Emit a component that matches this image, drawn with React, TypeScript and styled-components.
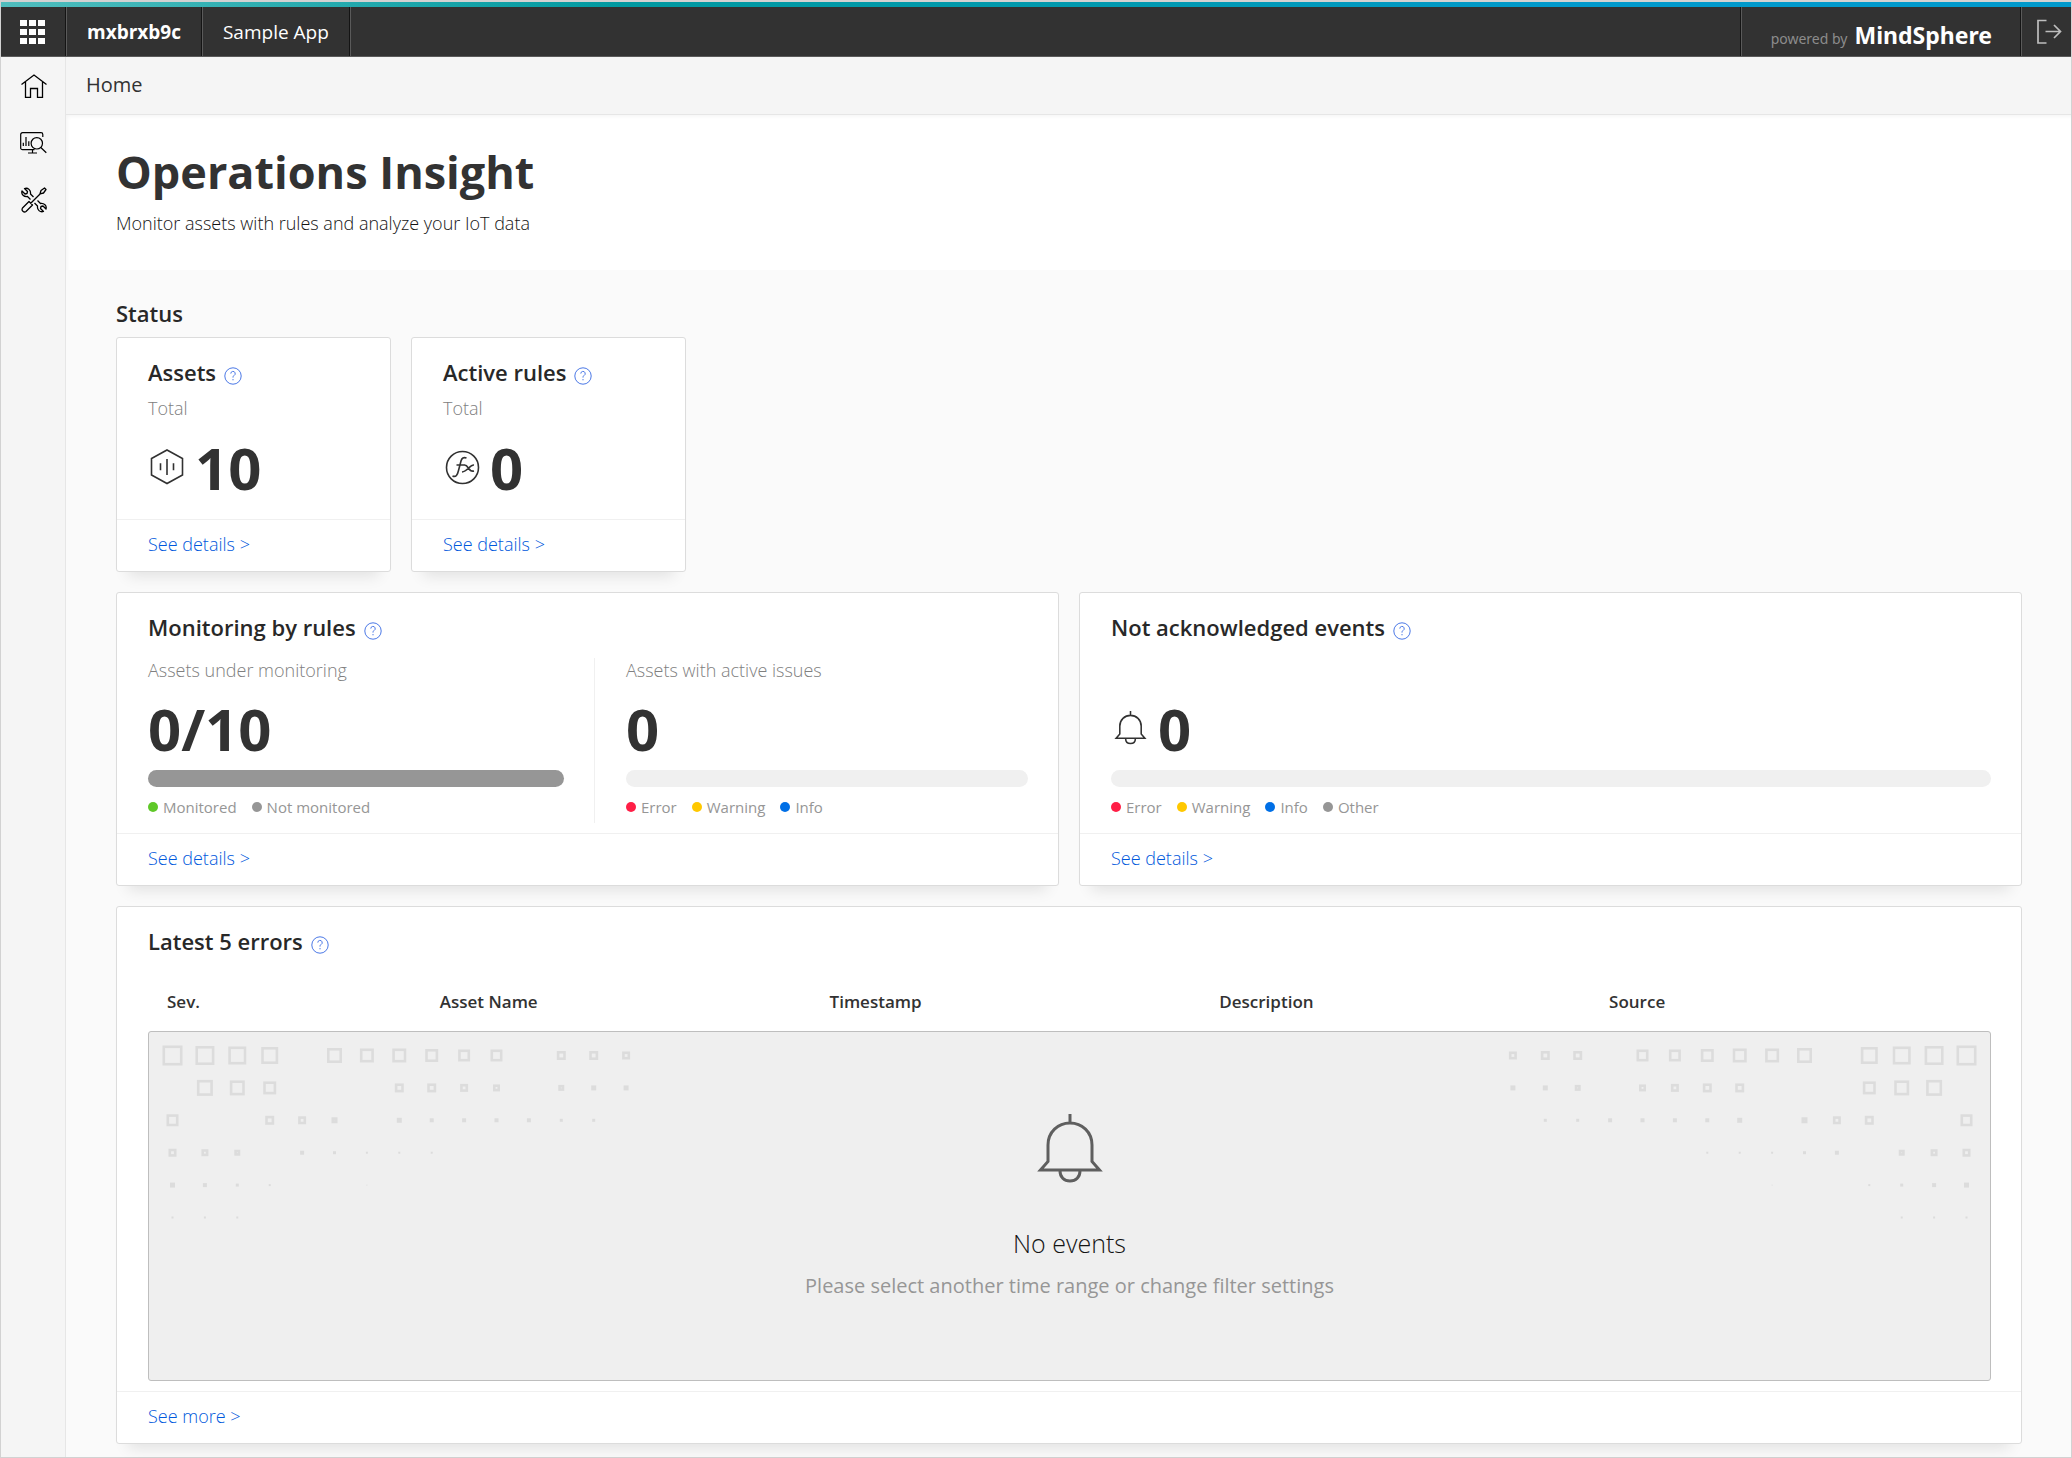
import React from 'react';
import styled, { createGlobalStyle } from 'styled-components';

const Global = createGlobalStyle`
  * { box-sizing: border-box; }
  body { margin: 0; background: #fafafa; color: #323232; font-family: "Open Sans", "Noto Sans", sans-serif; font-size: 18px; font-weight: 300; line-height: 24px; }
  h1, h2, h3, p { margin: 0; }
  a { color: inherit; text-decoration: none; }
  button { font: inherit; color: inherit; background: none; border: 0; padding: 0; cursor: pointer; }
`;

const Frame = styled.div`
  min-height: 100vh;
  display: flex;
  flex-direction: column;
  border: 1px solid #d2d2d2;
  border-top-width: 2px;
`;

const Header = styled.header`
  display: flex;
  flex-direction: column;
  border-bottom: 1px solid #5a5a5a;
  &::before {
    content: "";
    height: 5px;
    background: linear-gradient(to right, #50bebe 0, #0099a0 30%, #0099b0 55%, #0099cb 75%, #0099cb 100%);
  }
`;

const HeaderRow = styled.div`
  display: flex;
  height: 49px;
  background: #323232;
  color: #fff;
`;

const AppsButton = styled.button`
  width: 65px;
  display: grid;
  place-items: center;
  padding-right: 2px;
  border-right: 1px solid #141414;
`;

const HeaderCell = styled.a<{ $bold?: boolean }>`
  display: flex;
  align-items: center;
  padding: 0 20px;
  border-left: 1px solid #5a5a5a;
  border-right: 1px solid #141414;
  font-size: 19px;
  font-weight: ${(p) => (p.$bold ? 700 : 400)};
`;

const HeaderSpace = styled.div`
  flex: 1;
  border-left: 1px solid #5a5a5a;
  border-right: 1px solid #141414;
`;

const Brand = styled.div`
  display: flex;
  align-items: baseline;
  gap: 7px;
  padding: 16px 28px 0 29px;
  border-left: 1px solid #5a5a5a;
  border-right: 1px solid #141414;
  font-family: "Noto Sans", sans-serif;
  font-size: 14px;
  font-weight: 400;
  color: #8c8c8c;
`;

const BrandName = styled.strong`
  font-size: 23px;
  font-weight: 700;
  color: #fff;
`;

const LogoutButton = styled.button`
  width: 50px;
  display: grid;
  place-items: center;
  padding-left: 4px;
  border-left: 1px solid #5a5a5a;
`;

const Body = styled.div`
  flex: 1;
  display: flex;
`;

const Sidebar = styled.nav`
  width: 65px;
  display: flex;
  flex-direction: column;
  background: #f5f5f5;
  border-right: 1px solid #e6e6e6;
`;

const SideLink = styled.a`
  height: 57px;
  display: grid;
  place-items: center;
  padding-left: 1px;
`;

const Main = styled.main`
  flex: 1;
  min-width: 0;
`;

const Breadcrumb = styled.nav`
  height: 58px;
  padding: 16px 20px;
  background: #f5f5f5;
  border-bottom: 1px solid #e6e6e6;
  font-size: 20px;
  font-weight: 400;
`;

const Hero = styled.section`
  padding: 25px 50px 35px;
  background: #fff;
  box-shadow: inset 4px 4px 4px -3px rgba(0, 0, 0, 0.05);
`;

const Title = styled.h1`
  font-size: 45px;
  line-height: 64px;
  font-weight: 700;
`;

const Subtitle = styled.p`
  padding-top: 7px;
  color: #141414;
`;

const Content = styled.div`
  display: flex;
  flex-direction: column;
  gap: 20px;
  padding: 31px 49px 13px 50px;
`;

const StatusSection = styled.section`
  display: flex;
  flex-direction: column;
  gap: 12px;
`;

const Heading = styled.h2`
  font-size: 22px;
  font-weight: 600;
  line-height: 24px;
  color: #282828;
`;

const SmallCards = styled.div`
  display: flex;
  gap: 20px;
`;

const WideCards = styled.div`
  display: grid;
  grid-template-columns: 1fr 1fr;
  gap: 20px;
`;

const Card = styled.article<{ $small?: boolean }>`
  width: ${(p) => (p.$small ? '275px' : 'auto')};
  background: #fff;
  border: 1px solid #dcdcdc;
  border-radius: 3px;
  box-shadow: 0 16px 14px -12px rgba(0, 0, 0, 0.1);
`;

const CardHead = styled.header`
  display: flex;
  gap: 8px;
  padding: 22px 30px 0 31px;
`;

const HelpButton = styled.button`
  padding-top: 7px;
  display: flex;
`;

const CardFoot = styled.footer`
  height: 52px;
  padding: 12px 30px 12px 31px;
  border-top: 1px solid #f0f0f0;
`;

const MoreLink = styled.a`
  color: #0058dc;
`;

const Muted = styled.p`
  color: #808080;
`;

const SmallBody = styled.div`
  height: 134px;
  padding: 11px 30px 0 31px;
`;

const Figure = styled.div`
  display: flex;
  align-items: center;
  height: 64px;
  font-size: 58px;
  font-weight: 700;
`;

const FigureIcon = styled.span`
  width: 47px;
  display: flex;
  padding-bottom: 4px;
`;

const BellSlot = styled(FigureIcon)`
  padding-left: 2px;
`;

const SmallFigure = styled(Figure)`
  margin-top: 16px;
`;

const Split = styled.div<{ $two?: boolean }>`
  display: grid;
  grid-template-columns: ${(p) => (p.$two ? '478fr 463fr' : '1fr')};
  padding: 18px 0 10px;
`;

const Metric = styled.section<{ $divided?: boolean }>`
  height: 165px;
  padding: 0 30px 0 31px;
  border-right: ${(p) => (p.$divided ? '1px solid #f0f0f0' : '0')};
  ${Figure} { margin-top: 15px; }
`;

const MetricLabel = styled(Muted)`
  height: 24px;
`;

const Bar = styled.div<{ $full?: boolean }>`
  height: 17px;
  margin-top: 9px;
  border-radius: 9px;
  background: ${(p) => (p.$full ? '#969696' : '#f0f0f0')};
`;

const Legend = styled.ul`
  display: flex;
  gap: 15px;
  margin: 8px 0 0;
  padding: 0;
  list-style: none;
  font-size: 15px;
  font-weight: 400;
  color: #969696;
`;

const LegendItem = styled.li<{ $color: string }>`
  display: flex;
  align-items: center;
  gap: 5px;
  &::before {
    content: "";
    width: 10px;
    height: 10px;
    border-radius: 50%;
    background: ${(p) => p.$color};
  }
`;

const ErrorBody = styled.div`
  padding: 19px 30px 10px 31px;
`;

const Table = styled.table`
  width: 100%;
  table-layout: fixed;
  border-collapse: collapse;
  th {
    height: 58px;
    padding: 0 0 0 19px;
    text-align: left;
    font-size: 17px;
    font-weight: 600;
  }
  td { padding: 0; }
`;

const Empty = styled.div`
  position: relative;
  height: 350px;
  display: flex;
  flex-direction: column;
  align-items: center;
  padding-top: 80px;
  background: #efefef;
  border: 1px solid #bebebe;
  border-radius: 3px;
  overflow: hidden;
`;

const EmptyIcon = styled.span`
  display: flex;
  color: #5f5f5f;
`;

const Pattern = styled.svg<{ $right?: boolean }>`
  position: absolute;
  top: 0;
  left: ${(p) => (p.$right ? 'auto' : '0')};
  right: ${(p) => (p.$right ? '0' : 'auto')};
  transform: ${(p) => (p.$right ? 'scaleX(-1)' : 'none')};
`;

const EmptyTitle = styled.h3`
  margin-top: 41px;
  font-size: 25px;
  line-height: 36px;
  font-weight: 300;
  color: #141414;
`;

const EmptyText = styled(Muted)`
  margin-top: 13px;
  font-size: 20px;
  font-weight: 400;
  color: #969696;
`;

/* Squares per row as [column, side]; columns are spaced on a 32.4 grid */
const squares: [number, number][][] = [
  [[0, 20], [1, 19], [2, 18], [3, 17], [5, 15], [6, 14], [7, 14], [8, 13], [9, 12], [10, 12], [12, 9], [13, 9], [14, 8]],
  [[1, 16], [2, 15], [3, 13], [7, 9], [8, 9], [9, 8], [10, 7], [12, 6], [13, 5], [14, 5]],
  [[0, 12], [3, 9], [4, 8], [5, 6], [7, 5], [8, 4], [9, 4], [10, 4], [11, 4], [12, 3], [13, 3]],
  [[0, 8], [1, 7], [2, 6], [4, 4], [5, 3], [6, 2], [7, 2], [8, 2]],
  [[0, 5], [1, 4], [2, 3], [3, 2], [6, 1]],
  [[0, 2], [1, 2], [2, 2]],
];

const Squares = ({ right }: { right?: boolean }) => (
  <Pattern $right={right} width="500" height="220" aria-hidden="true">
    {squares.map((row, r) =>
      row.map(([c, side]) => {
        const x = 23.5 + c * 32.4;
        const y = 23.5 + r * 32.4;
        const hollow = side > 4;
        const w = hollow ? Math.max(side - 2.6, 2.4) : side;
        return (
          <rect
            key={`${r}-${c}`}
            x={x - w / 2}
            y={y - w / 2}
            width={w}
            height={w}
            fill={hollow ? 'none' : '#dcdcdc'}
            stroke={hollow ? '#dcdcdc' : 'none'}
            strokeWidth="2.6"
          />
        );
      })
    )}
  </Pattern>
);

const Bell = ({ size, weight }: { size: number; weight: number }) => (
  <svg width={size} height={size} viewBox="0 0 72 72" fill="none" stroke="currentColor" strokeWidth={weight} aria-hidden="true">
    <path d="M36 2v9M14 49.500V33C14 20 24 11 36 11s22 9 22 22v16.500l7.500 8.500h-59zM26 59c0 6 4 10 10 10s10-4 10-10" />
  </svg>
);

const Help = () => (
  <HelpButton aria-label="Help">
    <svg width="18" height="18" viewBox="0 0 18 18" fill="none" stroke="#4b78e6" strokeWidth="1">
      <circle cx="9" cy="9" r="8.200" />
      <path d="M6.800 6.600a2.200 2.200 0 1 1 3.300 1.900c-.8.500-1.100.9-1.100 2.100M9 12v1.300" />
    </svg>
  </HelpButton>
);

const LegendList = ({ items }: { items: [string, string][] }) => (
  <Legend>
    {items.map(([label, color]) => (
      <LegendItem key={label} $color={color}>{label}</LegendItem>
    ))}
  </Legend>
);

const red = '#ff1e46';
const yellow = '#ffc800';
const blue = '#006fe6';
const grey = '#969696';
const green = '#5fc828';

const CardTitle = ({ children }: { children: React.ReactNode }) => (
  <CardHead>
    <Heading as="h3">{children}</Heading>
    <Help />
  </CardHead>
);

const Details = ({ children = 'See details >' }: { children?: React.ReactNode }) => (
  <CardFoot>
    <MoreLink href="#">{children}</MoreLink>
  </CardFoot>
);

export default function App() {
  return (
    <>
      <Global />
      <Frame>
        <Header>
          <HeaderRow>
            <AppsButton aria-label="Apps">
              <svg width="25" height="24" viewBox="0 0 25 24" fill="#fff">
                {[0, 9, 18].map((x) => [0, 9, 18].map((y) => <rect key={`${x}-${y}`} x={x} y={y} width="7" height="6" />))}
              </svg>
            </AppsButton>
            <HeaderCell href="#" $bold>mxbrxb9c</HeaderCell>
            <HeaderCell href="#">Sample App</HeaderCell>
            <HeaderSpace />
            <Brand>powered by <BrandName>MindSphere</BrandName></Brand>
            <LogoutButton aria-label="Log out">
              <svg width="26" height="26" viewBox="0 0 26 26" fill="none" stroke="#bebebe" strokeWidth="1.700">
                <path d="M10.500 1.500H2v22.500h8.500M9.500 12.500H25M18 6l6.500 6.500L18 19" />
              </svg>
            </LogoutButton>
          </HeaderRow>
        </Header>
        <Body>
          <Sidebar>
            <SideLink href="#" aria-label="Home">
              <svg width="26" height="24" viewBox="0 0 26 24" fill="none" stroke="#000" strokeWidth="1.300">
                <path d="M.5 10.500 13 1l12.500 9.500M4.500 8v15.300h5V14.500h7v8.800h5V8" />
              </svg>
            </SideLink>
            <SideLink href="#" aria-label="Analysis">
              <svg width="27" height="22" viewBox="0 0 27 22" fill="none" stroke="#000" strokeWidth="1.200">
                <path d="M14.500 17.700H2.500a1.800 1.800 0 0 1-1.800-1.800V2.500A1.800 1.800 0 0 1 2.500.7H21a1.800 1.800 0 0 1 1.800 1.800V5M12.500 17.700V21M8 21h9M3.300 14v-3.300M6 14V5M8.800 14V9.300M20.800 15.500l5.500 5.200" />
                <circle cx="16.800" cy="11.300" r="5.700" />
              </svg>
            </SideLink>
            <SideLink href="#" aria-label="Tools">
              <svg width="26" height="26" viewBox="0 0 26 26" fill="none" stroke="#000" strokeWidth="1.300" strokeLinejoin="round">
                <path d="M12.500 10 9.500 7C10 3 7 .5 3.500 1.500L6.500 4.500 6 6.500 4 7 1 4C0 7.500 3 10 6.500 9.500L9.500 12.500" />
                <path d="M13.500 16 16.500 19C16 23 19 25.500 22.500 24.500L19.500 21.500 20 19.500 22 19 25 22C26 18.500 23 16 19.500 16.500L16.500 13.500" />
                <path d="M19 6.800 20 3.500 23.500 1 25 2.500 22.500 6zM19.300 6.700 9.500 16.500M8 14.500 11.500 18 5 24.500C3 26 0 23.500 1.500 21z" />
              </svg>
            </SideLink>
          </Sidebar>
          <Main>
            <Breadcrumb><a href="#">Home</a></Breadcrumb>
            <Hero>
              <Title>Operations Insight</Title>
              <Subtitle>Monitor assets with rules and analyze your IoT data</Subtitle>
            </Hero>
            <Content>
              <StatusSection>
                <Heading>Status</Heading>
                <SmallCards>
                  <Card $small>
                    <CardTitle>Assets</CardTitle>
                    <SmallBody>
                      <Muted>Total</Muted>
                      <SmallFigure>
                        <FigureIcon>
                          <svg width="38" height="38" viewBox="0 0 38 38" fill="none" stroke="#323232" strokeWidth="1.600">
                            <path d="M19 3 34.500 11.500V28L19 36.500 3.500 28V11.500zM12.500 16.300v7M19 12v16M25.500 16.300v7" />
                          </svg>
                        </FigureIcon>
                        10
                      </SmallFigure>
                    </SmallBody>
                    <Details />
                  </Card>
                  <Card $small>
                    <CardTitle>Active rules</CardTitle>
                    <SmallBody>
                      <Muted>Total</Muted>
                      <SmallFigure>
                        <FigureIcon>
                          <svg width="38" height="38" viewBox="0 0 38 38" fill="none" stroke="#323232" strokeWidth="1.600">
                            <circle cx="19.500" cy="20.500" r="16" />
                            <path d="M9.500 29c3.500 1.500 5-1 6-5.500l2.500-9.500c.8-3 2.500-4 5.500-3M13.500 18h8.500M21.500 18c4.500 0 3.500 7.500 9.500 6M31 18c-4-.5-6.500 6.500-12 7" />
                          </svg>
                        </FigureIcon>
                        0
                      </SmallFigure>
                    </SmallBody>
                    <Details />
                  </Card>
                </SmallCards>
              </StatusSection>
              <WideCards>
                <Card>
                  <CardTitle>Monitoring by rules</CardTitle>
                  <Split $two>
                    <Metric $divided>
                      <MetricLabel>Assets under monitoring</MetricLabel>
                      <Figure>0/10</Figure>
                      <Bar $full />
                      <LegendList items={[['Monitored', green], ['Not monitored', grey]]} />
                    </Metric>
                    <Metric>
                      <MetricLabel>Assets with active issues</MetricLabel>
                      <Figure>0</Figure>
                      <Bar />
                      <LegendList items={[['Error', red], ['Warning', yellow], ['Info', blue]]} />
                    </Metric>
                  </Split>
                  <Details />
                </Card>
                <Card>
                  <CardTitle>Not acknowledged events</CardTitle>
                  <Split>
                    <Metric>
                      <MetricLabel />
                      <Figure>
                        <BellSlot><Bell size={35} weight={3.2} /></BellSlot>
                        0
                      </Figure>
                      <Bar />
                      <LegendList items={[['Error', red], ['Warning', yellow], ['Info', blue], ['Other', grey]]} />
                    </Metric>
                  </Split>
                  <Details />
                </Card>
              </WideCards>
              <Card>
                <CardTitle>Latest 5 errors</CardTitle>
                <ErrorBody>
                  <Table>
                    <colgroup>
                      <col style={{ width: '14.8%' }} />
                      <col style={{ width: '21.15%' }} />
                      <col style={{ width: '21.15%' }} />
                      <col style={{ width: '21.15%' }} />
                      <col />
                    </colgroup>
                    <thead>
                      <tr>
                        <th>Sev.</th><th>Asset Name</th><th>Timestamp</th><th>Description</th><th>Source</th>
                      </tr>
                    </thead>
                    <tbody>
                      <tr>
                        <td colSpan={5}>
                          <Empty>
                            <Squares />
                            <Squares right />
                            <EmptyIcon><Bell size={72} weight={3} /></EmptyIcon>
                            <EmptyTitle>No events</EmptyTitle>
                            <EmptyText>Please select another time range or change filter settings</EmptyText>
                          </Empty>
                        </td>
                      </tr>
                    </tbody>
                  </Table>
                </ErrorBody>
                <Details>See more &gt;</Details>
              </Card>
            </Content>
          </Main>
        </Body>
      </Frame>
    </>
  );
}
